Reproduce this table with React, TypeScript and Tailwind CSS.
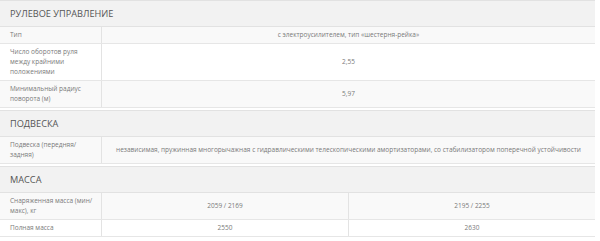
import React from 'react'

type Row = { label: string[]; values: string[] }
type Section = { title: string; rows: Row[] }

const sections: Section[] = [
  {
    title: 'Рулевое управление',
    rows: [
      { label: ['Тип'], values: ['с электроусилителем, тип «шестерня-рейка»'] },
      { label: ['Число оборотов руля', 'между крайними', 'положениями'], values: ['2,55'] },
      { label: ['Минимальный радиус', 'поворота (м)'], values: ['5,97'] },
    ],
  },
  {
    title: 'Подвеска',
    rows: [
      {
        label: ['Подвеска (передняя/', 'задняя)'],
        values: [
          'независимая, пружинная многорычажная с гидравлическими телескопическими амортизаторами, со стабилизатором поперечной устойчивости',
        ],
      },
    ],
  },
  {
    title: 'Масса',
    rows: [
      { label: ['Снаряженная масса (мин/', 'макс), кг'], values: ['2059 / 2169', '2195 / 2255'] },
      { label: ['Полная масса'], values: ['2550', '2630'] },
    ],
  },
]

function SpecRow({ row, odd }: { row: Row; odd: boolean }) {
  return (
    <div
      className={`flex border-b border-[#e6e6e6] text-[6.5px] leading-[10px] text-[#7a7a7a] ${
        odd ? 'bg-[#f9f9f9]' : 'bg-white'
      }`}
    >
      <div className="w-[102px] shrink-0 border-r border-[#e3e3e3] py-[3px] pl-[10px]">
        {row.label.map((l, i) => (
          <div key={i} className="whitespace-nowrap">{l}</div>
        ))}
      </div>
      {row.values.map((v, i) => (
        <div
          key={i}
          className={`flex flex-1 items-center justify-center py-[3px] text-center whitespace-nowrap ${
            i > 0 ? 'border-l border-[#e3e3e3]' : ''
          }`}
        >
          {v}
        </div>
      ))}
    </div>
  )
}

export default function App() {
  return (
    <div className="w-[595px] bg-white font-['Open_Sans',sans-serif]">
      {sections.map((s, si) => (
        <div key={s.title} className={si > 0 ? 'mt-[2px]' : ''}>
          <div className="flex h-[27px] items-center border-y border-[#e2e2e2] bg-[#f2f2f2] pl-[10px] text-[9.2px] uppercase text-[#555]">
            {s.title}
          </div>
          {s.rows.map((r, ri) => (
            <SpecRow key={ri} row={r} odd={ri % 2 === 0} />
          ))}
        </div>
      ))}
    </div>
  )
}
